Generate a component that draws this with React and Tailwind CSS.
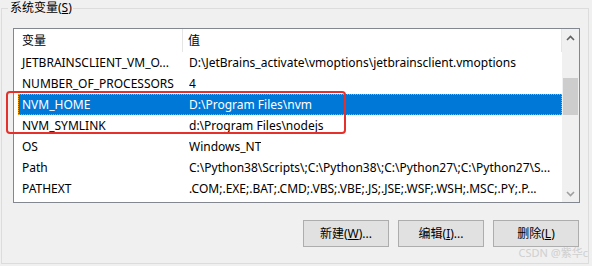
import React from "react";

const rows = [
  ["JETBRAINSCLIENT_VM_O...", "D:\\JetBrains_activate\\vmoptions\\jetbrainsclient.vmoptions"],
  ["NUMBER_OF_PROCESSORS", "4"],
  ["NVM_HOME", "D:\\Program Files\\nvm", true],
  ["NVM_SYMLINK", "d:\\Program Files\\nodejs"],
  ["OS", "Windows_NT"],
  ["Path", "C:\\Python38\\Scripts\\;C:\\Python38\\;C:\\Python27\\;C:\\Python27\\S..."],
  ["PATHEXT", ".COM;.EXE;.BAT;.CMD;.VBS;.VBE;.JS;.JSE;.WSF;.WSH;.MSC;.PY;.P..."],
];

function Btn({ children }) {
  return (
    <div className="w-[86px] h-[27px] border border-[#adadad] bg-[#e1e1e1] flex items-center justify-center text-[12px] text-black">
      {children}
    </div>
  );
}

export default function App() {
  return (
    <div
      className="relative w-[592px] h-[266px] bg-[#f0f0f0] pl-[1px] pt-[8px] overflow-hidden text-black"
      style={{ fontFamily: '"Noto Sans", "Noto Sans CJK SC", sans-serif' }}
    >
      <div className="relative w-[588px] h-[256px] border border-[#dcdcdc] flex flex-col">
        <div className="absolute left-[6px] top-[-9px] pl-[2px] pr-[1px] bg-[#f0f0f0] text-[12px] leading-[16px]">
          系统变量(<span className="underline">S</span>)
        </div>

        <div className="ml-[11px] mt-[19px] w-[567px] h-[175px] border border-[#828790] bg-white flex">
          <div className="w-[548px] flex flex-col text-[12px]">
            <div className="h-[23px] flex items-center border-r border-[#e5e5e5] shrink-0">
              <div className="w-[169px] h-full pl-[8px] flex items-center border-r border-[#e5e5e5]">变量</div>
              <div className="pl-[5px]">值</div>
            </div>
            {rows.map(([k, v, sel]) => (
              <div
                key={k}
                className={
                  sel
                    ? "ml-[4px] h-[21px] shrink-0 flex items-center bg-[#0078d7] text-white outline-1 outline-dotted outline-[#ff9c00] -outline-offset-1"
                    : "ml-[4px] h-[21px] shrink-0 flex items-center"
                }
              >
                <div className="w-[171px] pl-[4px] whitespace-nowrap overflow-hidden">{k}</div>
                <div className="whitespace-nowrap overflow-hidden">{v}</div>
              </div>
            ))}
          </div>
          <div className="w-[17px] bg-[#f0f0f0] flex flex-col">
            <div className="h-[17px] flex items-center justify-center">
              <svg width="9" height="6" viewBox="0 0 9 6">
                <path d="M1 5 L4.5 1.5 L8 5" stroke="#606060" strokeWidth="1.6" fill="none" />
              </svg>
            </div>
            <div className="flex-1 flex flex-col">
              <div className="mt-[32px] mx-[1px] h-[37px] bg-[#cdcdcd]" />
            </div>
            <div className="h-[17px] flex items-center justify-center">
              <svg width="9" height="6" viewBox="0 0 9 6">
                <path d="M1 1 L4.5 4.5 L8 1" stroke="#a0a0a0" strokeWidth="1.6" fill="none" />
              </svg>
            </div>
          </div>
        </div>

        <div className="mt-[17px] pr-[9px] flex justify-end gap-[9px]">
          <Btn>
            新建(<span className="underline">W</span>)...
          </Btn>
          <Btn>
            编辑(<span className="underline">I</span>)...
          </Btn>
          <Btn>
            删除(<span className="underline">L</span>)
          </Btn>
        </div>
      </div>

      <div className="absolute left-[6px] top-[91px] w-[340px] h-[43px] border-2 border-[#e5312b] rounded-[4px]" />

      <div className="absolute right-[4px] top-[245px] text-[11px] leading-[16px] text-[#cfcfcf]">
        CSDN @紫华c
      </div>
    </div>
  );
}
